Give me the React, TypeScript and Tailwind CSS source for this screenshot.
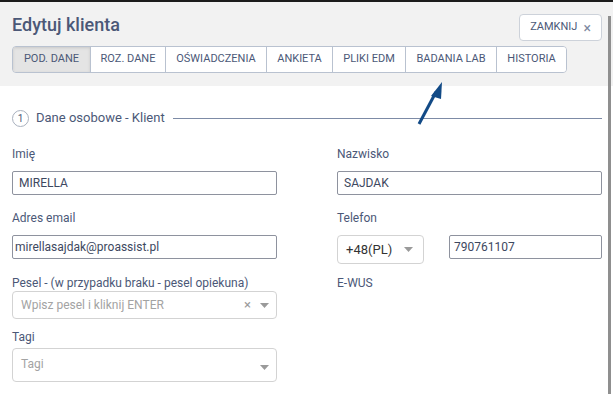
import React from "react";

const Caret = () => (
  <svg width="9" height="5" viewBox="0 0 9 5" className="shrink-0">
    <polygon points="0,0 9,0 4.5,5" fill="#9a9a9a" />
  </svg>
);

const tabs = [
  { t: "POD. DANE", w: "w-[77px]", active: true },
  { t: "ROZ. DANE", w: "w-[75px]" },
  { t: "OŚWIADCZENIA", w: "w-[101px]" },
  { t: "ANKIETA", w: "w-[66px]" },
  { t: "PLIKI EDM", w: "w-[73px]" },
  { t: "BADANIA LAB", w: "w-[91px]" },
  { t: "HISTORIA", w: "w-[70px]" },
];

export default function App() {
  return (
    <div
      className="relative w-[613px] h-[394px] overflow-hidden bg-white border-t-2 border-[#1c1c1c]"
      style={{ fontFamily: "Roboto, 'Liberation Sans', sans-serif" }}
    >
      {/* Header */}
      <div className="bg-[#f2f2f2] pl-3 pr-[11px] pt-3 pb-[13px]">
        <div className="flex items-start justify-between">
          <h1 className="text-[18px] leading-[22px] font-medium text-[#4b5877]">Edytuj klienta</h1>
          <button className="h-[27px] w-[83px] bg-white border border-[#cdd2da] rounded-[4px] text-[11px] text-[#4b5877] flex items-center justify-center gap-[6px]">
            <span>ZAMKNIJ</span>
            <span className="text-[14px] leading-none text-[#7c88a0]">×</span>
          </button>
        </div>
        <div className="mt-[5px] flex">
          <div className="flex h-[27px] border border-[#b9c2d0] rounded-[4px] overflow-hidden">
            {tabs.map((tab, i) => (
              <div
                key={tab.t}
                className={`${tab.w} flex items-center justify-center text-[11px] text-[#4b5877] ${
                  i > 0 ? "border-l border-[#b9c2d0]" : ""
                } ${tab.active ? "bg-[#e4e4e4] shadow-[inset_0_1px_3px_rgba(0,0,0,0.12)]" : "bg-white"}`}
              >
                {tab.t}
              </div>
            ))}
          </div>
        </div>
      </div>

      {/* Content */}
      <div className="px-3 pr-[11px]">
        <div className="pt-6 flex items-center h-[40px] box-border">
          <div className="w-[17px] h-[17px] rounded-full border border-[#a9b1be] flex items-center justify-center text-[10px] text-[#4b5877]">
            1
          </div>
          <span className="ml-[7px] text-[13px] text-[#4b5877]">Dane osobowe - Klient</span>
          <div className="ml-2 flex-1 h-px bg-[#7d8ba6]" />
        </div>

        <div className="flex justify-between mt-[21px]">
          {/* Left column */}
          <div className="w-[265px] flex flex-col">
            <label className="text-[12px] leading-[14px] text-[#4b5877]">Imię</label>
            <div className="mt-[10px] h-[24px] border border-[#8e929e] rounded-[2px] flex items-center px-[6px] text-[12px] text-[#3d4860]">
              MIRELLA
            </div>
            <label className="mt-4 text-[12px] leading-[14px] text-[#4b5877]">Adres email</label>
            <div className="mt-[10px] h-[24px] border border-[#8e929e] rounded-[2px] flex items-center px-[2px] text-[12px] text-[#3d4860]">
              mirellasajdak@proassist.pl
            </div>
            <label className="mt-[17px] text-[12px] leading-[14px] text-[#4b5877]">
              Pesel - (w przypadku braku - pesel opiekuna)
            </label>
            <div className="mt-px h-[28px] border border-[#d3d3d3] rounded-[4px] flex items-center pl-2 pr-[7px] text-[12px] text-[#a3a3a3]">
              <span className="flex-1">Wpisz pesel i kliknij ENTER</span>
              <span className="text-[13px] text-[#9a9a9a] mr-[9px]">×</span>
              <Caret />
            </div>
            <label className="mt-[11px] text-[12px] leading-[14px] text-[#4b5877]">Tagi</label>
            <div className="mt-1 h-[34px] border border-[#d3d3d3] rounded-[4px] flex items-start pl-2 pr-[7px] pt-[6px] text-[12px] text-[#a3a3a3]">
              <span className="flex-1">Tagi</span>
              <div className="mt-[10px]">
                <Caret />
              </div>
            </div>
          </div>

          {/* Right column */}
          <div className="w-[265px] flex flex-col">
            <label className="text-[12px] leading-[14px] text-[#4b5877]">Nazwisko</label>
            <div className="mt-[10px] h-[24px] border border-[#8e929e] rounded-[2px] flex items-center px-[6px] text-[12px] text-[#3d4860]">
              SAJDAK
            </div>
            <label className="mt-4 text-[12px] leading-[14px] text-[#4b5877]">Telefon</label>
            <div className="mt-[10px] flex items-start gap-[25px]">
              <div className="w-[87px] h-[29px] border border-[#d3d3d3] rounded-[4px] flex items-center pl-2 pr-[10px] text-[13px] text-[#333]">
                <span className="flex-1">+48(PL)</span>
                <Caret />
              </div>
              <div className="flex-1 h-[24px] border border-[#8e929e] rounded-[2px] flex items-center px-[4px] text-[12px] text-[#3d4860]">
                790761107
              </div>
            </div>
            <label className="mt-3 text-[12px] leading-[14px] text-[#4b5877]">E-WUS</label>
          </div>
        </div>
      </div>

      {/* Arrow annotation */}
      <svg className="absolute left-0 top-0 pointer-events-none" width="613" height="394" viewBox="0 0 613 394">
        <line x1="419" y1="122" x2="436" y2="90" stroke="#124a86" strokeWidth="3" />
        <polygon points="442,80 431,94 441,97" fill="#124a86" />
      </svg>

      {/* Right scrollbar edge */}
      <div className="absolute right-[2px] top-[14px] bottom-0 w-[3px] bg-[#8f8f8f]" />
    </div>
  );
}
